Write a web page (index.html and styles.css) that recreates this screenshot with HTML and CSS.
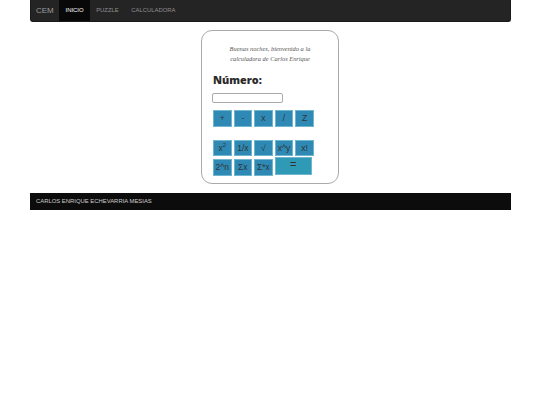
FILE: index.html
```html
<!DOCTYPE html>
<html lang="es">
<head>
    <meta charset="UTF-8">
    <meta name="viewport" content="width=device-width, initial-scale=1.0">
    <title>Calculadora - CEM</title>
    <link rel="stylesheet" href="styles.css">
</head>
<body>

<nav class="navbar">
    <a class="brand" href="#">CEM</a>
    <a class="nav-link active" href="#">INICIO</a>
    <a class="nav-link" href="#">PUZZLE</a>
    <a class="nav-link" href="#">CALCULADORA</a>
</nav>

<div class="calculator">
    <p class="welcome">Buenas noches, bienvenido a la<br>calculadora de Carlos Enrique</p>
    <h2>Número:</h2>
    <input type="text" class="number-input">

    <div class="key-row ops">
        <button class="key">+</button>
        <button class="key">-</button>
        <button class="key">x</button>
        <button class="key">/</button>
        <button class="key">Z</button>
    </div>

    <div class="key-row">
        <button class="key">x<sup>2</sup></button>
        <button class="key">1/x</button>
        <button class="key">√</button>
        <button class="key">x^y</button>
        <button class="key">x!</button>
    </div>
    <div class="key-row">
        <button class="key">2^n</button>
        <button class="key">Σx</button>
        <button class="key">Σ*x</button>
        <button class="key equals">=</button>
    </div>
</div>

<footer class="footer">CARLOS ENRIQUE ECHEVARRIA MESIAS</footer>

</body>
</html>
```

FILE: styles.css
```css
body {
    font-family: "Liberation Sans", Arial, sans-serif;
    background-color: #fff;
    color: #333;
    margin: 0;
    padding: 0;
}
.navbar {
    width: 481px;
    height: 22px;
    margin: 0 auto;
    display: flex;
    background-color: #242424;
    border-radius: 0 0 3px 3px;
    box-sizing: border-box;
    border: 1px solid #1a1a1a;
    border-top: none;
}
.brand {
    color: #9d9d9d;
    font-size: 8px;
    line-height: 21px;
    padding: 0 5.5px;
    text-decoration: none;
}
.nav-link {
    color: #8f8f8f;
    font-size: 5.9px;
    line-height: 21px;
    padding: 0 6.3px;
    text-decoration: none;
}
.nav-link.active {
    background-color: #080808;
    color: #fff;
}
.calculator {
    width: 138px;
    height: 154px;
    margin: 8px auto 9px;
    box-sizing: border-box;
    border: 1px solid #aaa;
    border-radius: 11px;
    padding: 13px 11px 0;
}
.welcome {
    font-family: "Liberation Serif", serif;
    font-style: italic;
    font-size: 6.4px;
    line-height: 10px;
    color: #555;
    text-align: center;
    margin: 0;
}
h2 {
    font-family: "Open Sans", sans-serif;
    font-weight: 800;
    font-size: 10.8px;
    line-height: 16px;
    color: #2b2b2b;
    margin: 8px 0 5px;
}
.number-input {
    display: block;
    width: 71px;
    height: 10px;
    box-sizing: border-box;
    padding: 0;
    margin: 0 0 7px -1px;
    border: 1px solid #aaa;
    border-radius: 2px;
}
.key-row {
    display: flex;
    gap: 2.1px;
    margin-bottom: 3px;
}
.key-row.ops {
    margin-bottom: 13px;
}
.key {
    width: 18.5px;
    height: 16.5px;
    padding: 0;
    font-family: inherit;
    font-size: 8.5px;
    color: #333;
    background-color: #2e8ab5;
    border: 1px solid #6fb5d0;
    border-radius: 0;
}
.key sup {
    font-size: 6px;
    line-height: 0;
}
.key.equals {
    width: 37px;
    height: 18px;
    margin-top: -2px;
    font-size: 11px;
    padding-bottom: 4px;
    background-color: #2f9ab5;
}
.footer {
    width: 481px;
    height: 17px;
    margin: 0 auto;
    box-sizing: border-box;
    padding-left: 6.5px;
    font-size: 5.9px;
    line-height: 17px;
    color: #ccc;
    background-color: #0c0c0c;
}
```
